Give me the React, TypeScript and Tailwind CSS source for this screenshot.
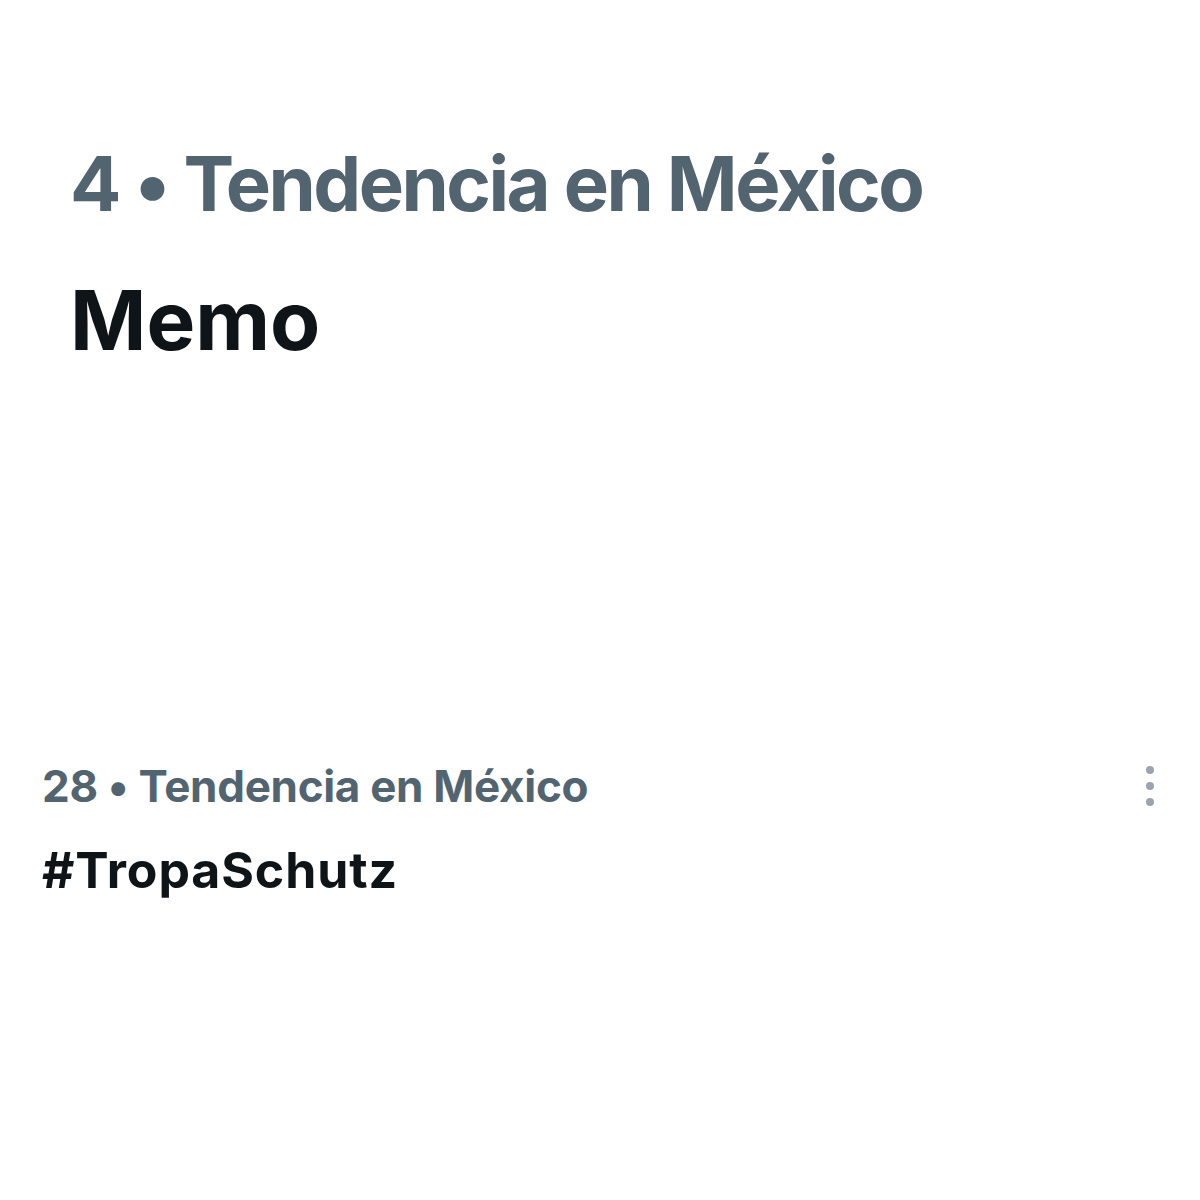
const font = { fontFamily: "Inter, 'Noto Sans', sans-serif" };

function MoreDots() {
  return (
    <div className="flex flex-col items-center gap-[8px]">
      <span className="h-[8px] w-[8px] rounded-full bg-[#9ba3ab]" />
      <span className="h-[8px] w-[8px] rounded-full bg-[#9ba3ab]" />
      <span className="h-[8px] w-[8px] rounded-full bg-[#9ba3ab]" />
    </div>
  );
}

export default function App() {
  return (
    <div className="flex h-[1200px] w-[1200px] flex-col bg-white" style={font}>
      {/* enlarged trend */}
      <section className="pl-[70px] pt-[145px]">
        <p className="text-[76px] font-bold leading-none tracking-[-2.5px] text-[#536471]">
          4 • Tendencia en México
        </p>
        <p className="mt-[59px] text-[82px] font-bold leading-none text-[#0f1419]">
          Memo
        </p>
      </section>

      {/* regular trend row */}
      <section className="mt-[402px] pl-[42px] pr-[46px]">
        <div className="flex items-center justify-between">
          <p className="text-[44px] font-bold leading-none tracking-[-0.3px] text-[#536471]">
            28 • Tendencia en México
          </p>
          <MoreDots />
        </div>
        <p className="mt-[37px] text-[50px] font-bold leading-none tracking-[0.9px] text-[#0f1419]">
          #TropaSchutz
        </p>
      </section>
    </div>
  );
}
